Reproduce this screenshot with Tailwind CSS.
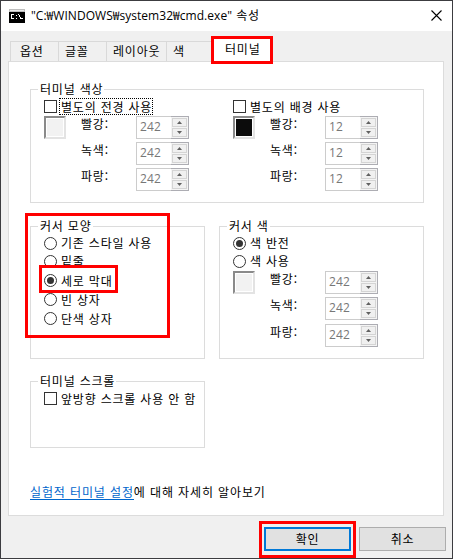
<!DOCTYPE html>
<html lang="ko">
<head>
    <meta charset="UTF-8">
    <meta name="viewport" content="width=device-width, initial-scale=1.0">
    <title>cmd.exe 속성</title>
    <script src="https://cdn.jsdelivr.net/npm/@tailwindcss/browser@4"></script>
</head>
<body class="overflow-hidden">
    <div id="window" class="relative flex flex-col w-[453px] h-[559px] border border-[#3c3c40] bg-[#f0f0f0] text-black text-[12px] leading-4 tracking-[0.8px] font-['Noto_Sans_CJK_KR',sans-serif]">
        <header class="flex items-center h-[30px] bg-white pl-2 pr-[9px] shrink-0">
            <svg class="w-4 h-3.5 mr-[6px] shrink-0" viewBox="0 0 16 14" shape-rendering="crispEdges">
                <rect width="16" height="14" fill="#bdbdbd"/>
                <rect x="1" y="1" width="14" height="1" fill="#e8e8e8"/>
                <rect x="0" y="3" width="16" height="11" fill="#000"/>
                <path d="M5 5.5H2.5V9.5H5M9.5 5v1M10.5 6v2M11.5 8v2" fill="none" stroke="#fff"/>
                <path d="M7 6h1v1H7zM7 9h1v1H7zM12 9h2v1h-2z" fill="#fff"/>
            </svg>
            <h1 id="title" class="grow whitespace-nowrap -mt-px"><span class="font-['Open_Sans','Noto_Sans_CJK_KR',sans-serif] tracking-[0.04px]">"C:₩WINDOWS₩system32₩cmd.exe"</span> 속성</h1>
            <svg class="w-[11px] h-[11px] mr-[1px] -mt-[2px]" viewBox="0 0 11 11"><path d="M.5.5l10 10M10.5.5l-10 10" stroke="#000" stroke-width="1.1"/></svg>
        </header>

        <nav class="flex items-end h-[30px] pl-[9px] shrink-0">
            <div class="w-[48px] h-[20px] border-l border-t border-[#d9d9d9] pl-[9px] pt-[1px]">옵션</div>
            <div class="w-[48px] h-[20px] border-l border-t border-[#d9d9d9] pl-[6px] pt-[1px]">글꼴</div>
            <div class="w-[60px] h-[20px] border-l border-t border-[#d9d9d9] pl-[6px] pt-[1px]">레이아웃</div>
            <div class="w-[45px] h-[20px] border-l border-t border-[#d9d9d9] pl-[6px] pt-[1px]">색</div>
            <div class="relative z-10 w-[62px] h-[28px] -mb-[3px] border-3 border-[#ff0000] bg-white pl-[11px] pt-[2px]">터미널</div>
        </nav>

        <main class="flex flex-col w-[436px] h-[455px] ml-[7px] border border-[#dcdcdc] bg-white pl-[21px] pt-[19px] shrink-0">
            <fieldset class="w-[394px] h-[122px] border border-[#dcdcdc] pl-[13px]">
                <legend class="-ml-[6px] pl-[2px] pr-[1px] h-4">터미널 색상</legend>
                <div class="flex">
                    <div class="w-[189px]">
                        <div class="flex items-center h-[19px]">
                            <span class="w-[13px] h-[13px] border border-[#333]"></span>
                            <span class="ml-[2px] border border-dotted border-black h-[17px] w-[94px] pl-[1px] leading-[15px] whitespace-nowrap">별도의 전경 사용</span>
                        </div>
                        <div class="flex">
                            <span class="w-[22px] h-[23px] border-2 border-t-[#8a8a8a] border-l-[#8a8a8a] border-b-[#e3e3e3] border-r-[#e3e3e3] bg-[#f2f2f2] shadow-[inset_0_0_0_1px_#fff]"></span>
                            <div class="grid grid-cols-[55px_53px] gap-y-[3px] ml-[15px]">
                                <span>빨강:</span><div data-spin="242"></div>
                                <span>녹색:</span><div data-spin="242"></div>
                                <span>파랑:</span><div data-spin="242"></div>
                            </div>
                        </div>
                    </div>
                    <div>
                        <div class="flex items-center h-[19px]">
                            <span class="w-[13px] h-[13px] border border-[#333]"></span>
                            <span class="ml-[4px]">별도의 배경 사용</span>
                        </div>
                        <div class="flex">
                            <span class="w-[22px] h-[23px] border-2 border-t-[#8a8a8a] border-l-[#8a8a8a] border-b-[#e3e3e3] border-r-[#e3e3e3] bg-[#0c0c0c] shadow-[inset_0_0_0_1px_#fff]"></span>
                            <div class="grid grid-cols-[55px_53px] gap-y-[3px] ml-[15px]">
                                <span>빨강:</span><div data-spin="12"></div>
                                <span>녹색:</span><div data-spin="12"></div>
                                <span>파랑:</span><div data-spin="12"></div>
                            </div>
                        </div>
                    </div>
                </div>
            </fieldset>

            <div class="flex gap-[14px] mt-[15px]">
                <fieldset class="relative w-[175px] h-[141px] border border-[#dcdcdc] pl-[13px]">
                    <legend class="-ml-[6px] pl-[2px] pr-[1px] h-4">커서 모양</legend>
                    <div class="flex flex-col">
                        <div class="flex items-center h-[18px] gap-[4px]"><i data-radio></i>기존 스타일 사용</div>
                        <div class="flex items-center h-[18px] gap-[4px]"><i data-radio></i>밑줄</div>
                        <div class="flex items-center h-[19px] mt-px gap-[4px]"><i data-radio="on"></i>세로 막대</div>
                        <div class="flex items-center h-[19px] gap-[4px]"><i data-radio></i>빈 상자</div>
                        <div class="flex items-center h-[19px] gap-[4px]"><i data-radio></i>단색 상자</div>
                    </div>
                    <!-- highlights -->
                    <div class="absolute -left-[6px] -top-[21px] w-[145px] h-[125px] border-3 border-[#ff0000]"></div>
                    <div class="absolute left-[8px] top-[31px] w-[79px] h-[28px] border-3 border-[#ff0000]"></div>
                </fieldset>
                <fieldset class="w-[205px] h-[141px] border border-[#dcdcdc] pl-[13px]">
                    <legend class="-ml-[6px] pl-[2px] pr-[1px] h-4">커서 색</legend>
                    <div class="flex items-center h-[18px] gap-[4px]"><i data-radio="on"></i>색 반전</div>
                    <div class="flex items-center h-[18px] gap-[4px]"><i data-radio></i>색 사용</div>
                    <div class="flex mt-[1px]">
                        <span class="w-[22px] h-[23px] border-2 border-t-[#8a8a8a] border-l-[#8a8a8a] border-b-[#e3e3e3] border-r-[#e3e3e3] bg-[#f2f2f2] shadow-[inset_0_0_0_1px_#fff]"></span>
                        <div class="grid grid-cols-[55px_53px] grid-rows-[26px_27px_23px] ml-[15px]">
                            <span>빨강:</span><div data-spin="242"></div>
                            <span>녹색:</span><div data-spin="242"></div>
                            <span>파랑:</span><div data-spin="242"></div>
                        </div>
                    </div>
                </fieldset>
            </div>

            <fieldset class="w-[175px] h-[75px] mt-[14px] border border-[#dcdcdc] pl-[13px]">
                <legend class="-ml-[6px] pl-[2px] pr-[1px] h-4">터미널 스크롤</legend>
                <div class="flex items-center h-[19px] gap-[4px] whitespace-nowrap">
                    <span class="w-[13px] h-[13px] border border-[#333] shrink-0"></span>앞방향 스크롤 사용 안 함
                </div>
            </fieldset>

            <p id="more" class="mt-[36px] whitespace-nowrap tracking-[0.88px]"><a href="#" class="inline-block h-4 border-b border-[#0066cc] text-[#0066cc]">실험적 터미널 설정</a>에 대해 자세히 알아보기</p>
        </main>

        <footer class="flex items-start pl-[258px] pt-[5px]">
            <div class="w-[97px] h-[37px] border-3 border-[#ff0000] pt-[3px] pl-[2px]">
                <button class="block w-[87px] h-[24px] border-2 border-[#0078d7] bg-[#e1e1e1] leading-[18px]">확인</button>
            </div>
            <button class="w-[87px] h-[24px] mt-[6px] ml-[3px] border border-[#adadad] bg-[#e1e1e1] leading-[20px]">취소</button>
        </footer>
    </div>

    <script>
        // disabled number fields with up/down arrows
        document.querySelectorAll('[data-spin]').forEach(el => {
            el.className = 'flex w-[53px] h-[23px] border border-[#cccccc] bg-white text-[#777] tracking-[0.2px]';
            el.innerHTML = `
                <span class="w-[34px] pl-[3px] leading-[19px] font-['Open_Sans',sans-serif]">${el.dataset.spin}</span>
                <span class="flex flex-col gap-px w-[18px] -my-px -mr-px py-px pl-[1px] border-y border-r border-[#adadb3] bg-[#f4f4f4]">
                    <span class="flex items-center justify-center w-[15px] h-[9px] border border-[#d4d4d4] bg-[#f0f0f0]"><svg width="5" height="3" viewBox="0 0 5 3"><path d="M0 3L2.5 0L5 3z" fill="#606060"/></svg></span>
                    <span class="flex items-center justify-center w-[15px] h-[9px] border border-[#d4d4d4] bg-[#f0f0f0]"><svg width="5" height="3" viewBox="0 0 5 3"><path d="M0 0L2.5 3L5 0z" fill="#606060"/></svg></span>
                </span>`;
        });
        document.querySelectorAll('[data-radio]').forEach(el => {
            el.className = 'flex items-center justify-center w-[13px] h-[13px] rounded-full border border-[#333] shrink-0';
            if (el.dataset.radio) el.innerHTML = '<b class="w-[7px] h-[7px] rounded-full bg-[#333]"></b>';
        });
    </script>
</body>
</html>
